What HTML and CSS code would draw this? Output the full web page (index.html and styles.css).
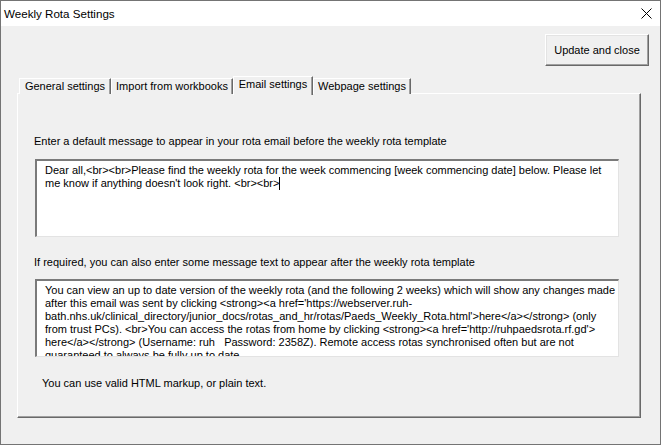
FILE: index.html
```html
<!DOCTYPE html>
<html>
<head>
<meta charset="utf-8">
<title>Weekly Rota Settings</title>
<link rel="stylesheet" href="styles.css">
</head>
<body>
<div class="window">
  <div class="titlebar">
    <span class="title">Weekly Rota Settings</span>
    <svg class="close" width="11" height="11" viewBox="0 0 11 11"><path d="M0.5 0.5 L10.5 10.5 M10.5 0.5 L0.5 10.5" stroke="#000" stroke-width="1" fill="none"/></svg>
  </div>
  <div class="client">
    <div class="toolbar">
      <button class="btn">Update and close</button>
    </div>
    <div class="tabset">
      <div class="tabs">
        <div class="tab tab-general">General settings</div>
        <div class="tab tab-import">Import from workbooks</div>
        <div class="tab tab-email active">Email settings</div>
        <div class="tab tab-web">Webpage settings</div>
      </div>
      <div class="page">
        <div class="label label-first">Enter a default message to appear in your rota email before the weekly rota template</div>
        <div class="textbox textbox-first">
          <div class="line">Dear all,&lt;br&gt;&lt;br&gt;Please find the weekly rota for the week commencing [week commencing date] below. Please let</div>
          <div class="line">me know if anything doesn't look right. &lt;br&gt;&lt;br&gt;<span class="caret"></span></div>
        </div>
        <div class="label label-second">If required, you can also enter some message text to appear after the weekly rota template</div>
        <div class="textbox textbox-second">
          <div class="line">You can view an up to date version of the weekly rota (and the following 2 weeks) which will show any changes made</div>
          <div class="line">after this email was sent by clicking &lt;strong&gt;&lt;a href='https://webserver.ruh-</div>
          <div class="line">bath.nhs.uk/clinical_directory/junior_docs/rotas_and_hr/rotas/Paeds_Weekly_Rota.html'&gt;here&lt;/a&gt;&lt;/strong&gt; (only</div>
          <div class="line">from trust PCs). &lt;br&gt;You can access the rotas from home by clicking &lt;strong&gt;&lt;a href='http://ruhpaedsrota.rf.gd'&gt;</div>
          <div class="line">here&lt;/a&gt;&lt;/strong&gt; (Username: ruh   Password: 2358Z). Remote access rotas synchronised often but are not</div>
          <div class="line">guaranteed to always be fully up to date.</div>
        </div>
        <div class="label label-hint">You can use valid HTML markup, or plain text.</div>
      </div>
    </div>
  </div>
</div>
</body>
</html>
```

FILE: styles.css
```css
* { box-sizing: border-box; }
html, body { margin: 0; padding: 0; background: #f0f0f0; }
body { font-family: "Liberation Sans", Arial, sans-serif; font-size: 11px; color: #000; }

.window {
  width: 661px;
  height: 445px;
  border: 1px solid #747474;
  display: flex;
  flex-direction: column;
  background: #f0f0f0;
}

.titlebar {
  height: 25px;
  background: #fff;
  display: flex;
  align-items: center;
  padding: 0 8px 0 3px;
  flex: none;
}
.title { font-size: 11.6px; flex: 1; white-space: nowrap; }
.close { display: block; margin-top: -1px; }

.client { flex: 1; display: flex; flex-direction: column; }

.toolbar { display: flex; justify-content: flex-end; padding: 8px 11px 0 0; }
.btn {
  width: 104px;
  height: 32px;
  margin: 0;
  padding: 0;
  font: inherit;
  color: #000;
  background: #f0f0f0;
  border-top: 1px solid #fff;
  border-left: 1px solid #fff;
  border-right: 1px solid #696969;
  border-bottom: 1px solid #696969;
  box-shadow: inset -1px -1px 0 #a0a0a0, inset 1px 1px 0 #e3e3e3;
}

.tabset { margin: 9px 19px 0 16px; }
.tabs { display: flex; align-items: flex-end; height: 19px; padding-left: 2px; position: relative; z-index: 1; }
.tab {
  height: 16px;
  line-height: 14px;
  text-align: center;
  white-space: nowrap;
  background: #f0f0f0;
  border-top: 1px solid #fff;
  border-left: 1px solid #fff;
  border-right: 1px solid #696969;
  box-shadow: inset -1px 0 0 #a0a0a0;
}
.tab-general { width: 92px; }
.tab-import { width: 122px; }
.tab-email { width: 80px; }
.tab-web { width: 98px; }
.tab.active {
  height: 19px;
  line-height: 14px;
  margin-bottom: -1px;
  padding-bottom: 2px;
}

.page {
  height: 325px;
  margin-top: -1px;
  border-top: 1px solid #fff;
  border-left: 1px solid #fff;
  border-right: 1px solid #696969;
  border-bottom: 1px solid #696969;
  box-shadow: inset -1px -1px 0 #a0a0a0;
  padding: 41px 0 0 16px;
}

.label { line-height: 13px; white-space: nowrap; }
.label-second { margin-top: 19px; }
.label-hint { margin-top: 20px; margin-left: 8px; }

.textbox {
  width: 584px;
  height: 78px;
  margin-left: 1px;
  background: #fff;
  border-top: 2px solid #7a7a7a;
  border-left: 2px solid #7a7a7a;
  border-right: 1px solid #e3e3e3;
  border-bottom: 1px solid #e3e3e3;
  padding: 3px 0 0 8px;
  overflow: hidden;
  line-height: 13px;
}
.textbox-first { margin-top: 11px; }
.textbox-second { margin-top: 10px; }
.line { white-space: pre; }
.caret { display: inline-block; width: 1px; height: 13px; background: #000; vertical-align: top; }
```
